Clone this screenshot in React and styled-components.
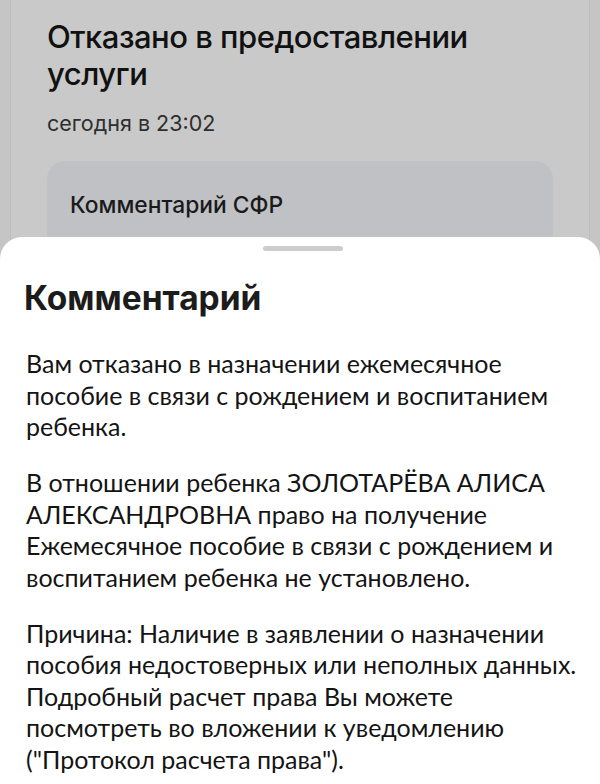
import React from 'react';
import styled, { createGlobalStyle } from 'styled-components';

const GlobalStyle = createGlobalStyle`
    html, body {
        margin: 0;
        padding: 0;
        background: #c5c5c5;
    }
    * {
        box-sizing: border-box;
    }
`;

const Screen = styled.div`
    position: relative;
    width: 600px;
    height: 784px;
    overflow: hidden;
    background: #c5c5c5;
    padding: 0 10px;
`;

const Page = styled.div`
    height: 100%;
    background: #c9c9c9;
    border-left: 1px solid #bdbdbd;
    border-right: 1px solid #bdbdbd;
    padding: 18px 36px 0 36px;
    font-family: Inter, "Noto Sans", sans-serif;
    color: #111;

    .title {
        margin: 0;
        font-size: 31px;
        line-height: 37px;
        font-weight: 500;
        letter-spacing: -0.5px;
    }

    .date {
        margin: 17px 0 0 0;
        font-size: 21.5px;
        line-height: 28px;
        color: #2e2e2e;
    }
`;

const InfoCard = styled.div`
    margin-top: 24px;
    height: 160px;
    border-radius: 18px;
    background: #bfc1c5;
    padding: 30px 23px;

    > span {
        font-size: 22.8px;
        line-height: 28px;
        font-weight: 500;
        color: #1a1a1a;
    }
`;

const Sheet = styled.div`
    position: absolute;
    left: 0;
    right: 0;
    top: 237px;
    bottom: 0;
    background: #fff;
    border-radius: 22px 22px 0 0;
    padding: 9px 20px 0 26px;
    display: flex;
    flex-direction: column;

    .handle {
        align-self: center;
        width: 80px;
        height: 5px;
        border-radius: 3px;
        background: #cdcdcd;
    }

    .header {
        margin: 27px 0 0 -2px;
        font-family: Inter, "Noto Sans", sans-serif;
        font-size: 33.5px;
        line-height: 40px;
        font-weight: 700;
        color: #1c1c1c;
    }
`;

const Paragraph = styled.p`
    margin: ${p => (p.first ? '30px' : '24.5px')} 0 0 0;
    font-family: Lato, "Noto Sans", sans-serif;
    font-size: 25px;
    line-height: 31.5px;
    color: #141414;
`;

const App = () => {
    return (
        <>
            <GlobalStyle />
            <Screen>
                <Page>
                    <h1 className='title'>Отказано в предоставлении услуги</h1>
                    <p className='date'>сегодня в 23:02</p>
                    <InfoCard>
                        <span>Комментарий СФР</span>
                    </InfoCard>
                </Page>
                <Sheet>
                    <div className='handle' />
                    <div className='header'>Комментарий</div>
                    <Paragraph first>
                        Вам отказано в назначении ежемесячное пособие в связи с рождением и воспитанием ребенка.
                    </Paragraph>
                    <Paragraph>
                        В отношении ребенка ЗОЛОТАРЁВА АЛИСА АЛЕКСАНДРОВНА право на получение Ежемесячное пособие в связи с рождением и воспитанием ребенка не установлено.
                    </Paragraph>
                    <Paragraph>
                        Причина: Наличие в заявлении о назначении пособия недостоверных или неполных данных. Подробный расчет права Вы можете посмотреть во вложении к уведомлению ("Протокол расчета права").
                    </Paragraph>
                </Sheet>
            </Screen>
        </>
    );
};

export default App;
